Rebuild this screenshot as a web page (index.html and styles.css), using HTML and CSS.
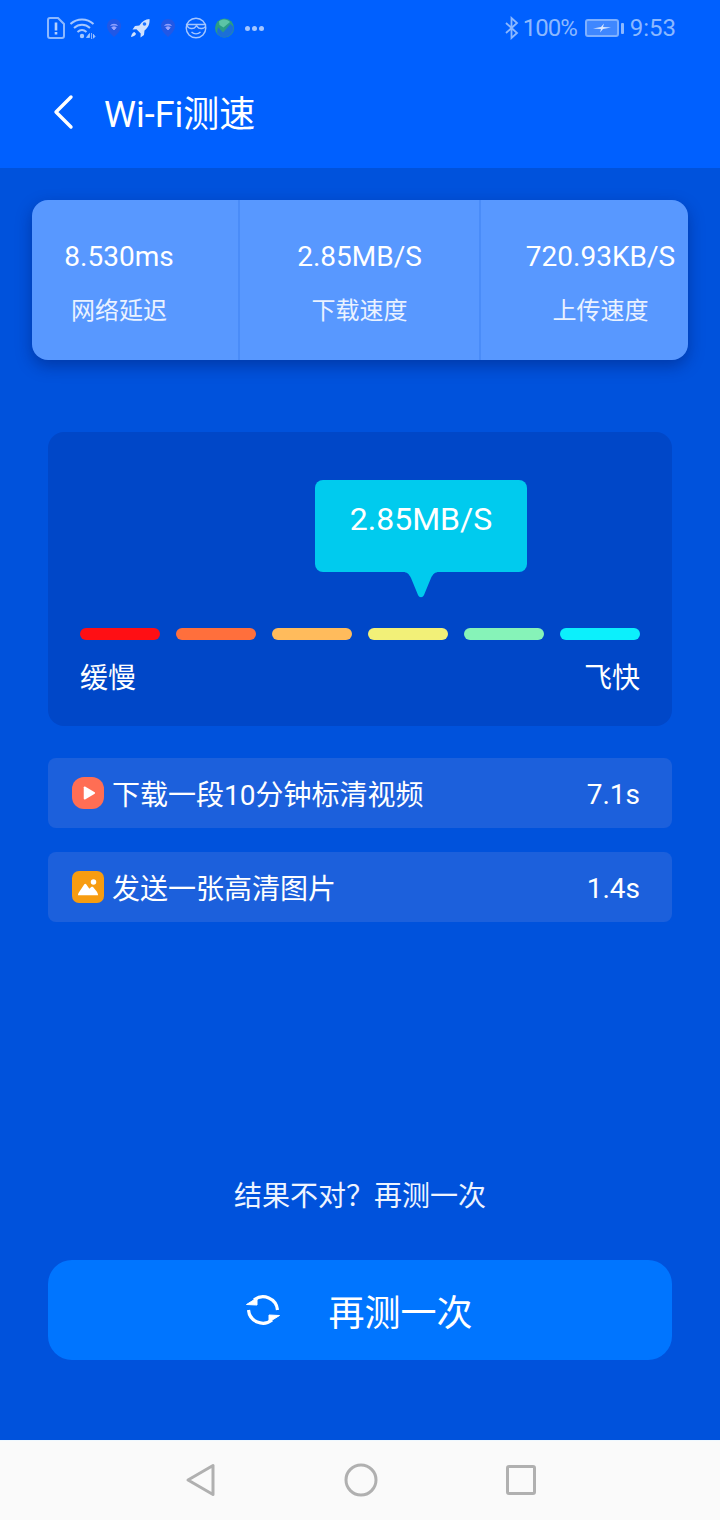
FILE: index.html
```html
<!DOCTYPE html>
<html lang="zh-CN">
<head>
  <meta charset="UTF-8" />
  <meta name="viewport" content="width=device-width, initial-scale=1.0" />
  <title>Wi-Fi测速</title>
  <link rel="stylesheet" href="styles.css">
</head>
<body>
  <div class="top">
    <div class="statusbar">
      <div class="status-left">
        <svg width="18" height="22" viewBox="0 0 18 22"><path d="M3 1h8l6 6v12a2 2 0 0 1-2 2H3a2 2 0 0 1-2-2V3a2 2 0 0 1 2-2z" fill="none" stroke="#8cb8ff" stroke-width="2"/><path d="M9 5.500v8M9 15v2.500" stroke="#b4d0ff" stroke-width="2.600" fill="none"/></svg>
        <svg class="ic-wifi" width="26" height="22" viewBox="0 0 26 22"><path d="M0.500 7C7 1 17 1 23.500 7M4 11c4.800-4.200 11.200-4.200 16 0M7.500 15c2.800-2.500 6.200-2.500 9 0" fill="none" stroke="#a4c6ff" stroke-width="2"/><circle cx="12" cy="19" r="2.200" fill="#a4c6ff"/><path d="M16.500 20.500l3-4v4zM21.500 16v6M23 17l2 2.500-2 2" fill="#a4c6ff" stroke="#a4c6ff" stroke-width="0.800"/></svg>
        <svg class="ic-pin" width="14" height="22" viewBox="0 0 14 22"><path d="M7 2c4 0 7 2.800 7 7 0 4-3.500 8-7 11-3.500-3-7-7-7-11 0-4.200 3-7 7-7z" fill="#2158e6"/><path d="M3.500 8.500c2-1.600 5-1.600 7 0M7 13l-2.200-2.500c1.300-.9 3.100-.9 4.400 0z" fill="#9aa6ff" stroke="#9aa6ff" stroke-width="0.900"/></svg>
        <svg class="ic-rocket" width="20" height="22" viewBox="0 0 20 22"><path d="M19.500 2c.5 5-1.500 9-5 11.500l-.5 4.500-3.500 2.500.2-4-4.200-4.200-4 .3L5 9l4.300-.5C12 4.500 15.500 2 19.500 2z" fill="#cfe1ff"/><path d="M4.500 15c-2 .5-3 2.200-3.500 5 2.800-.5 4.500-1.500 5-3.200z" fill="#cfe1ff"/><circle cx="14.500" cy="7" r="1.800" fill="#1f74ff"/></svg>
        <svg class="ic-pin2" width="14" height="22" viewBox="0 0 14 22"><path d="M7 2c4 0 7 2.800 7 7 0 4-3.500 8-7 11-3.500-3-7-7-7-11 0-4.200 3-7 7-7z" fill="#2158e6"/><path d="M3.500 8.500c2-1.600 5-1.600 7 0M7 13l-2.200-2.500c1.300-.9 3.100-.9 4.400 0z" fill="#9aa6ff" stroke="#9aa6ff" stroke-width="0.900"/></svg>
        <svg class="ic-face" width="22" height="22" viewBox="0 0 22 22"><circle cx="11" cy="11" r="9.800" fill="none" stroke="#a4c6ff" stroke-width="1.400"/><path d="M1.500 7.500h19v1.500c-.3 2.800-6.500 3.500-8 .8-.6-1-1.400-1-2 0-1.500 2.700-7.700 2-8-.8z" fill="#0060ff" stroke="#a4c6ff" stroke-width="1.400" stroke-linejoin="round"/><path d="M6.500 15c2.500 2.500 6.500 2.500 9 0" fill="none" stroke="#a4c6ff" stroke-width="1.400"/></svg>
        <svg class="ic-globe" width="19" height="20" viewBox="0 0 19 20"><circle cx="9.500" cy="10" r="9.500" fill="#2a9c86"/><path d="M3 9l5 5.500L15.500 6l3 3c.5 5-3.500 10-9 10.500-3.500 0-6-2-7.500-5z" fill="#1c6fd8"/><path d="M4 3.500C7.500.5 12.500 1 15 4L8.500 9.500 4.500 7z" fill="#5cc4a6"/></svg>
        <div class="dots"><i></i><i></i><i></i></div>
      </div>
      <div class="status-right">
        <svg width="16" height="24" viewBox="0 0 16 24"><path d="M2 7l11 10-5.500 5V2l5.500 5L2 17" fill="none" stroke="#8cb8ff" stroke-width="1.800"/></svg>
        <span class="pct">100%</span>
        <div class="battery"><svg width="20" height="10" viewBox="0 0 20 10"><path d="M1 5.500l8-1.500 3-3.500-1 3.500 8 .5-8 1.500-3 3.500 1-3.500z" fill="#dbe8ff"/></svg></div>
        <div class="battery-tip"></div>
        <span class="clock">9:53</span>
      </div>
    </div>
    <header class="titlebar">
      <svg class="back" width="22" height="36" viewBox="0 0 22 36"><path d="M19 3L4 18l15 15" fill="none" stroke="#fff" stroke-width="3.400" stroke-linecap="round" stroke-linejoin="round"/></svg>
      <h1>Wi-Fi测速</h1>
    </header>
  </div>

  <main class="content">
    <section class="stats">
      <div class="stat stat-first">
        <div class="stat-num">8.530ms</div>
        <div class="stat-label">网络延迟</div>
      </div>
      <div class="stat">
        <div class="stat-num">2.85MB/S</div>
        <div class="stat-label">下载速度</div>
      </div>
      <div class="stat stat-last">
        <div class="stat-num">720.93KB/S</div>
        <div class="stat-label">上传速度</div>
      </div>
    </section>

    <section class="gauge">
      <div class="bubble-wrap">
        <div class="bubble">2.85MB/S</div>
        <svg class="bubble-tip" width="36" height="27" viewBox="0 0 36 27"><path d="M0 0h36c-4 0-6 2-8 6l-7 17c-1.500 3-4.500 3-6 0L8 6C6 2 4 0 0 0z" fill="#00cbee"/></svg>
      </div>
      <div class="segments">
        <span class="seg seg1"></span>
        <span class="seg seg2"></span>
        <span class="seg seg3"></span>
        <span class="seg seg4"></span>
        <span class="seg seg5"></span>
        <span class="seg seg6"></span>
      </div>
      <div class="gauge-labels">
        <span>缓慢</span>
        <span>飞快</span>
      </div>
    </section>

    <section class="rows">
      <div class="row">
        <div class="row-icon icon-video"><svg width="14" height="16" viewBox="0 0 16 18"><path d="M2 2.500v13c0 .8.800 1.200 1.500.8l11-6.500c.6-.4.6-1.200 0-1.600l-11-6.500C2.800 1.300 2 1.700 2 2.500z" fill="#fff"/></svg></div>
        <span class="row-text">下载一段10分钟标清视频</span>
        <span class="row-time">7.1s</span>
      </div>
      <div class="row">
        <div class="row-icon icon-pic"><svg width="22" height="20" viewBox="0 0 24 20"><path d="M1 19c0-1 .5-2 1-3l6-9c.6-.8 1.500-.8 2 0l3.500 5 2-2c.6-.5 1.400-.5 2 0l4 5c.6 1 1.500 2.500 1.500 4z" fill="#fff"/><circle cx="18" cy="4.500" r="3" fill="#fff"/></svg></div>
        <span class="row-text">发送一张高清图片</span>
        <span class="row-time">1.4s</span>
      </div>
    </section>

    <p class="retry-hint">结果不对<span class="tc">？</span>再测一次</p>

    <button class="retry-btn">
      <svg width="36" height="36" viewBox="0 0 36 36"><path d="M9 8A14.500 14.500 0 0 1 32.500 18M27 28A14.500 14.500 0 0 1 3.500 18" fill="none" stroke="#fff" stroke-width="3.200"/><path d="M1.500 12.500L12 6v7zM34.500 23.500L24 30v-7z" fill="#fff" stroke="#fff" stroke-width="1" stroke-linejoin="round"/></svg>
      <span>再测一次</span>
    </button>
  </main>

  <nav class="navbar">
    <svg width="32" height="36" viewBox="0 0 32 36"><path d="M28 3.500v29L3 18z" fill="none" stroke="#b0b0b0" stroke-width="3" stroke-linejoin="round"/></svg>
    <svg width="34" height="34" viewBox="0 0 34 34"><circle cx="17" cy="17" r="15" fill="none" stroke="#b0b0b0" stroke-width="3"/></svg>
    <svg width="30" height="30" viewBox="0 0 30 30"><rect x="1.500" y="1.500" width="27" height="27" rx="1.500" fill="none" stroke="#b0b0b0" stroke-width="3"/></svg>
  </nav>
</body>
</html>
```

FILE: styles.css
```css
* { margin: 0; padding: 0; box-sizing: border-box; }
body {
  width: 720px;
  height: 1520px;
  display: flex;
  flex-direction: column;
  background: #0052dc;
  color: #fff;
  font-family: Roboto, 'Noto Sans CJK SC', sans-serif;
  overflow: hidden;
}

/* top bar */
.top { background: #0060ff; height: 168px; flex-shrink: 0; }
.statusbar {
  height: 56px;
  padding: 0 44px 0 47px;
  display: flex;
  align-items: center;
  justify-content: space-between;
}
.status-left, .status-right { display: flex; align-items: center; }
.ic-wifi { margin-left: 5px; }
.ic-pin { margin-left: 11px; }
.ic-rocket { margin-left: 9px; }
.ic-pin2 { margin-left: 11px; }
.ic-face { margin-left: 10px; }
.ic-globe { margin-left: 8px; }
.dots { display: flex; gap: 2px; margin-left: 11px; }
.dots i { width: 5px; height: 5px; border-radius: 50%; background: #a4c6ff; }
.status-right { color: #8cb8ff; font-size: 24px; }
.pct { margin-left: 3px; letter-spacing: -1px; }
.battery {
  width: 34px;
  height: 18px;
  margin-left: 8px;
  border: 2px solid #7fb0ff;
  border-radius: 3px;
  background: #3f87ff;
  display: flex;
  align-items: center;
  justify-content: center;
}
.battery-tip { width: 3px; height: 11px; margin-left: 2px; background: #8cb8ff; border-radius: 1px; }
.clock { margin-left: 6px; }

.titlebar {
  height: 112px;
  padding-left: 52px;
  display: flex;
  align-items: center;
}
.titlebar h1 { margin-left: 30px; margin-top: -2px; font-size: 36px; font-weight: 400; }

.content { flex: 1; padding: 32px 32px 0; display: flex; flex-direction: column; }

/* stats card */
.stats {
  height: 160px;
  display: grid;
  grid-template-columns: 208px 241px 207px;
  background: #5898ff;
  border-radius: 16px;
  box-shadow: 0 6px 16px rgba(0, 20, 90, 0.4);
  flex-shrink: 0;
}
.stat {
  display: flex;
  flex-direction: column;
  align-items: center;
  padding-top: 38px;
  border-right: 2px solid #4a8cf8;
  white-space: nowrap;
}
.stat-first { padding-right: 32px; }
.stat-last { padding-left: 32px; border-right: none; }
.stat-num { font-size: 28px; line-height: 38px; }
.stat-label { margin-top: 18px; font-size: 24px; line-height: 34px; color: #eaf2ff; }

/* gauge */
.gauge {
  height: 294px;
  margin: 72px 16px 0;
  padding: 48px 32px 0;
  background: #0047c8;
  border-radius: 16px;
  flex-shrink: 0;
}
.bubble-wrap { width: 212px; margin-left: 235px; position: relative; height: 118px; }
.bubble {
  height: 92px;
  padding-top: 17px;
  background: #00cbee;
  border-radius: 8px;
  font-size: 32px;
  line-height: 44px;
  text-align: center;
}
.bubble-tip { position: absolute; left: 88px; top: 92px; }
.segments { display: flex; justify-content: space-between; margin-top: 30px; }
.seg { width: 80px; height: 12px; border-radius: 6px; }
.seg1 { background: #ff0f14; }
.seg2 { background: #ff6f3c; }
.seg3 { background: #ffbb5c; }
.seg4 { background: #f2f078; }
.seg5 { background: #86f3b8; }
.seg6 { background: #0cf0fc; }
.gauge-labels {
  display: flex;
  justify-content: space-between;
  margin-top: 18px;
  font-size: 28px;
  line-height: 42px;
}

/* result rows */
.rows { margin: 32px 16px 0; display: flex; flex-direction: column; gap: 24px; flex-shrink: 0; }
.row {
  height: 70px;
  padding: 0 32px 0 24px;
  background: #1c60dc;
  border-radius: 8px;
  display: flex;
  align-items: center;
}
.row-icon {
  width: 32px;
  height: 32px;
  border-radius: 12px;
  display: flex;
  align-items: center;
  justify-content: center;
}
.icon-video { background: #ff6e54; padding-left: 1px; }
.icon-pic { background: #f79c10; border-radius: 7px; }
.row-text { margin-left: 8px; font-size: 28px; flex: 1; }
.row-time { font-size: 28px; padding-top: 2px; }

.retry-hint {
  margin-top: 254px;
  text-align: center;
  font-size: 28px;
  line-height: 42px;
  color: #eef4ff;
}
.tc { font-family: 'Noto Sans CJK TC', sans-serif; line-height: 0; }
.retry-btn {
  height: 100px;
  margin: 42px 16px 0;
  border: none;
  border-radius: 24px;
  background: #0075ff;
  color: #fff;
  font-family: inherit;
  font-size: 36px;
  display: flex;
  align-items: center;
  justify-content: center;
  flex-shrink: 0;
}
.retry-btn svg { margin-left: -2px; }
.retry-btn span { margin-left: 47px; }

/* android nav */
.navbar {
  height: 80px;
  flex-shrink: 0;
  background: #fafafa;
  border-top: 1px solid #eef8ff;
  padding-bottom: 1px;
  display: flex;
  align-items: center;
  justify-content: center;
  gap: 127px;
}
.navbar svg:last-child { margin-left: 1px; }
```
